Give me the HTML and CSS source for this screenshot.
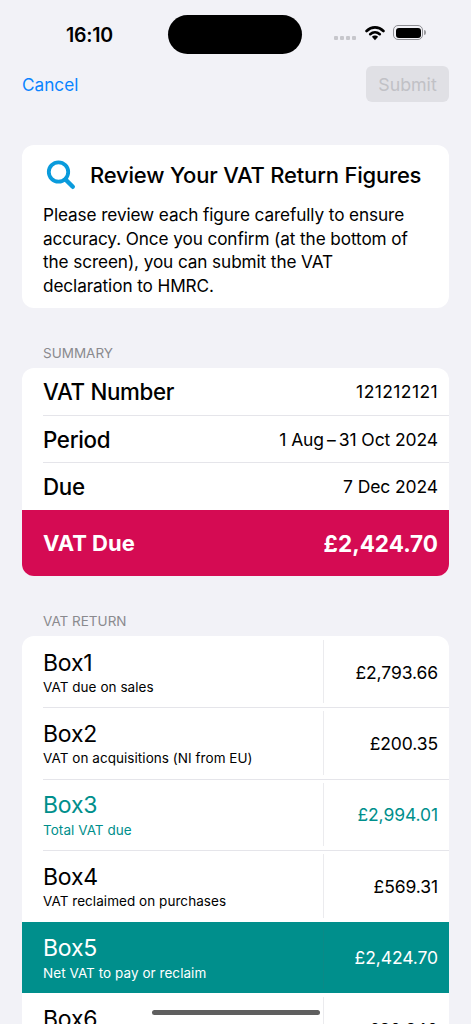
FILE: index.html
```html
<!DOCTYPE html>
<html lang="en">

<head>
    <meta charset="UTF-8">
    <meta name="viewport" content="width=device-width, initial-scale=1.0">
    <title>Review VAT Return</title>
    <link rel="stylesheet" href="styles.css">
</head>

<body>
    <div class="screen">
        <div class="status-bar">
            <span class="time">16:10</span>
            <div class="island"></div>
            <div class="status-icons">
                <div class="dots"><i></i><i></i><i></i><i></i></div>
                <svg class="wifi" width="20" height="16" viewBox="0 0 20 16">
                    <path d="M1.600 6C3.800 3.800 6.700 2.400 10 2.400S16.200 3.800 18.400 6" fill="none" stroke="#000" stroke-width="2.700" stroke-linecap="round" />
                    <path d="M5.200 9.200C6.500 8 8.100 7.200 10 7.200s3.500.8 4.800 2" fill="none" stroke="#000" stroke-width="2.600" stroke-linecap="round" />
                    <path d="M6.900 11.700c.8-.7 1.900-1.200 3.100-1.200s2.300.5 3.100 1.200L10 15.200z" fill="#000" />
                </svg>
                <div class="battery"><div class="battery-fill"></div></div>
                <div class="battery-cap"></div>
            </div>
        </div>

        <nav class="nav">
            <a class="cancel">Cancel</a>
            <button class="submit" disabled>Submit</button>
        </nav>

        <section class="card intro">
            <div class="intro-head">
                <svg class="search-icon" width="32" height="32" viewBox="0 0 32 32">
                    <circle cx="14.500" cy="13" r="9.700" fill="none" stroke="#0a9bdc" stroke-width="3.800" />
                    <path d="M21.500 20.500l7.300 7.300" fill="none" stroke="#0a9bdc" stroke-width="4.400" stroke-linecap="round" />
                </svg>
                <h1>Review Your VAT Return Figures</h1>
            </div>
            <p>Please review each figure carefully to ensure accuracy. Once you confirm (at the bottom of the screen), you can submit the VAT declaration to HMRC.</p>
        </section>

        <h2 class="section-title">SUMMARY</h2>
        <section class="card">
            <div class="sum-row"><span class="sum-label">VAT Number</span><span class="sum-value sum-number">121212121</span></div>
            <div class="sum-row"><span class="sum-label">Period</span><span class="sum-value">1 Aug&#8201;–&#8201;31 Oct 2024</span></div>
            <div class="sum-row last"><span class="sum-label">Due</span><span class="sum-value">7 Dec 2024</span></div>
            <div class="due-row"><span class="due-label">VAT Due</span><span class="due-value">£2,424.70</span></div>
        </section>

        <h2 class="section-title">VAT RETURN</h2>
        <section class="card">
            <div class="box-row">
                <div class="box-text"><div class="box-name">Box1</div><div class="box-desc">VAT due on sales</div></div>
                <div class="box-value">£2,793.66</div>
            </div>
            <div class="box-row">
                <div class="box-text"><div class="box-name">Box2</div><div class="box-desc">VAT on acquisitions (NI from EU)</div></div>
                <div class="box-value">£200.35</div>
            </div>
            <div class="box-row teal">
                <div class="box-text"><div class="box-name">Box3</div><div class="box-desc">Total VAT due</div></div>
                <div class="box-value">£2,994.01</div>
            </div>
            <div class="box-row last">
                <div class="box-text"><div class="box-name">Box4</div><div class="box-desc">VAT reclaimed on purchases</div></div>
                <div class="box-value">£569.31</div>
            </div>
            <div class="box-row net">
                <div class="box-text"><div class="box-name">Box5</div><div class="box-desc">Net VAT to pay or reclaim</div></div>
                <div class="box-value">£2,424.70</div>
            </div>
            <div class="box-row">
                <div class="box-text"><div class="box-name">Box6</div><div class="box-desc">Total sales ex VAT</div></div>
                <div class="box-value">£20,240</div>
            </div>
        </section>

        <div class="home-indicator"></div>
    </div>
</body>

</html>
```

FILE: styles.css
```css
html, body {
    margin: 0;
    padding: 0;
}

body {
    font-family: Inter, "Liberation Sans", sans-serif;
    color: #000;
    background: #f2f2f7;
}

.screen {
    position: relative;
    width: 471px;
    height: 1024px;
    overflow: hidden;
    background: #f2f2f7;
}

/* status bar */
.status-bar {
    display: flex;
    align-items: center;
    height: 39px;
    padding-top: 15px;
}

.time {
    width: 168px;
    padding-left: 11px;
    box-sizing: border-box;
    text-align: center;
    font-size: 19.500px;
    font-weight: 600;
    letter-spacing: -0.200px;
}

.island {
    width: 134px;
    height: 39px;
    border-radius: 20px;
    background: #000;
}

.status-icons {
    display: flex;
    align-items: center;
    margin-left: 32px;
}

.dots {
    display: flex;
    gap: 2px;
    margin-top: 6px;
}

.dots i {
    display: block;
    width: 4px;
    height: 4px;
    border-radius: 1px;
    background: #c7c7cc;
}

.wifi {
    margin-left: 9px;
    margin-top: -3px;
}

.battery {
    width: 30px;
    height: 15px;
    margin-left: 8px;
    margin-top: -4px;
    padding: 1.500px;
    box-sizing: border-box;
    border: 1px solid #8e8e93;
    border-radius: 5px;
}

.battery-fill {
    height: 100%;
    width: 100%;
    border-radius: 3px;
    background: #000;
}

.battery-cap {
    width: 2px;
    height: 5px;
    margin-left: 1px;
    margin-top: -4px;
    border-radius: 0 2px 2px 0;
    background: #9a9a9e;
}

/* nav */
.nav {
    display: flex;
    justify-content: space-between;
    align-items: center;
    margin: 12px 22px 0;
}

.cancel {
    font-size: 17.200px;
    color: #0a84ff;
}

.submit {
    width: 83px;
    height: 36px;
    border: none;
    border-radius: 6px;
    background: #e0e0e5;
    color: #c1c1c6;
    font-family: inherit;
    font-size: 17.800px;
}

/* cards */
.card {
    margin: 0 22px;
    border-radius: 12px;
    background: #fff;
    overflow: hidden;
}

.intro {
    height: 163px;
    margin-top: 43px;
    padding: 0 21px;
    box-sizing: border-box;
}

.intro-head {
    display: flex;
    align-items: center;
    height: 60px;
}

.search-icon {
    flex: none;
    margin-left: 1px;
}

.intro-head h1 {
    margin: 0 0 0 14px;
    font-size: 22px;
    font-weight: 500;
    letter-spacing: -0.200px;
    white-space: nowrap;
}

.intro p {
    max-width: 375px;
    margin: -2px 0 0;
    font-size: 17.200px;
    line-height: 23.600px;
    letter-spacing: -0.100px;
}

.section-title {
    margin: 37px 0 7px 43px;
    font-size: 13.500px;
    line-height: 16px;
    font-weight: 400;
    color: #8a8a8e;
}

/* summary rows */
.sum-row {
    display: flex;
    justify-content: space-between;
    align-items: center;
    height: 47px;
    margin-left: 21px;
    padding-right: 11px;
    box-sizing: border-box;
}

.sum-row + .sum-row {
    border-top: 1px solid #e5e5ea;
}

.sum-row.last {
    height: 48px;
}

.sum-label {
    font-size: 22.300px;
    font-weight: 500;
    letter-spacing: -0.300px;
}

.sum-value {
    font-size: 17.500px;
    letter-spacing: -0.100px;
}

.sum-number {
    letter-spacing: 0.400px;
}

.due-row {
    display: flex;
    justify-content: space-between;
    align-items: center;
    height: 66px;
    padding: 0 11px 0 21px;
    background: #d50b53;
    color: #fff;
    font-weight: 700;
}

.due-label {
    font-size: 22px;
}

.due-value {
    font-size: 22.500px;
}

/* box rows */
.box-row {
    position: relative;
    display: flex;
    height: 71.400px;
    align-items: stretch;
}

.box-row::after {
    content: "";
    position: absolute;
    left: 21px;
    right: 0;
    bottom: -1px;
    height: 1px;
    background: #e5e5ea;
}

.box-text {
    width: 302px;
    margin: 4px 0;
    padding-left: 21px;
    box-sizing: border-box;
    border-right: 1.500px solid #ebebee;
}

.box-name {
    margin-top: 8.500px;
    font-size: 23px;
    line-height: 28px;
    letter-spacing: -0.200px;
}

.box-desc {
    margin-top: 2.500px;
    font-size: 13.500px;
    line-height: 16px;
    letter-spacing: 0.050px;
}

.box-value {
    flex: 1;
    align-self: center;
    padding: 1px 11px 0 0;
    text-align: right;
    font-size: 17.500px;
    letter-spacing: -0.100px;
}

.box-row.last::after,
.box-row.net::after {
    display: none;
}

.box-row.teal {
    color: #008f8c;
}

.box-row.net {
    background: #008f8c;
    color: #fff;
}

.box-row.net .box-text {
    border-right-color: #0a8a87;
}

.home-indicator {
    position: absolute;
    left: 152px;
    top: 1010px;
    width: 168px;
    height: 5px;
    border-radius: 3px;
    background: #5f5f5f;
}
```
